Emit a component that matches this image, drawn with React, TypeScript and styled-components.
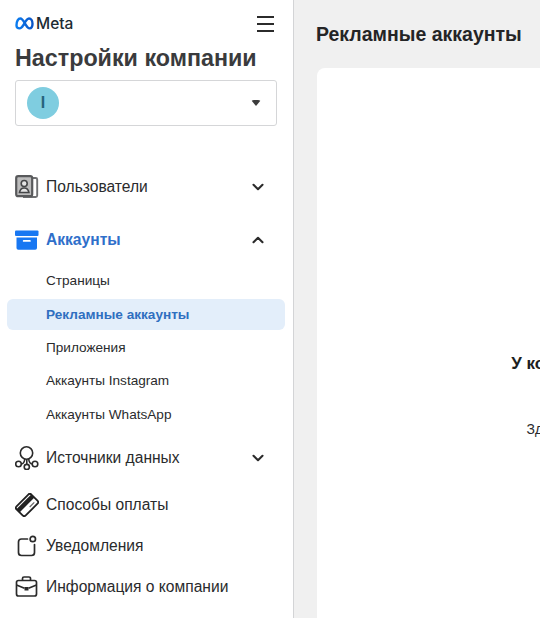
import React from "react";
import styled, { createGlobalStyle } from "styled-components";

const Global = createGlobalStyle`
  html, body { margin: 0; padding: 0; height: 100%; overflow: hidden; background: #f0f0f0; }
  #root { height: 100%; }
  * { box-sizing: border-box; }
`;

const Page = styled.div`
  display: flex;
  width: 540px;
  height: 618px;
  overflow: hidden;
  font-family: "Liberation Sans", Arial, sans-serif;
  color: #1c1e21;
`;

const Sidebar = styled.aside`
  flex: 0 0 294px;
  height: 618px;
  background: #fff;
  border-right: 1px solid #d3d4d6;
  display: flex;
  flex-direction: column;
`;

const TopBar = styled.div`
  display: flex;
  align-items: center;
  justify-content: space-between;
  padding: 12px 19px 0 15px;
  height: 35px;
`;

const Brand = styled.div`
  display: flex;
  align-items: center;
  gap: 2px;
  font-family: "Inter", "Liberation Sans", sans-serif;
  font-size: 15.5px;
  font-weight: 500;
  color: #1c2b33;
`;

const Burger = styled.button`
  display: flex;
  flex-direction: column;
  justify-content: space-between;
  width: 17px;
  height: 16px;
  padding: 0;
  border: 0;
  background: none;
  span { display: block; height: 2px; background: #2b2b2b; }
`;

const Title = styled.h1`
  margin: 8px 0 0 15px;
  height: 30px;
  font-size: 23.3px;
  line-height: 30px;
  font-weight: 700;
  color: #3a3b3d;
  white-space: nowrap;
`;

const CompanySelect = styled.div`
  margin: 7px 16px 0 15px;
  height: 46px;
  border: 1px solid #d5d6d8;
  border-radius: 3px;
  display: flex;
  align-items: center;
  justify-content: space-between;
  padding: 0 15px 0 11px;
`;

const Avatar = styled.div`
  width: 32px;
  height: 32px;
  border-radius: 50%;
  background: #7fcde0;
  color: #25647c;
  display: flex;
  align-items: center;
  justify-content: center;
  font-size: 16px;
  font-weight: 700;
`;

const Caret = styled.div`
  width: 0;
  height: 0;
  margin-top: -1px;
  border-left: 5px solid transparent;
  border-right: 5px solid transparent;
  border-top: 6px solid #3c3c3c;
  border-radius: 3px;
`;

const Nav = styled.nav`
  margin-top: 40px;
  display: flex;
  flex-direction: column;
`;

const Row = styled.div<{ $active?: boolean; $after?: number }>`
  height: 41px;
  margin-bottom: ${(p) => p.$after ?? 0}px;
  padding: 0 29px 0 15px;
  display: flex;
  align-items: center;
  font-size: 15.6px;
  font-weight: ${(p) => (p.$active ? 700 : 400)};
  color: ${(p) => (p.$active ? "#2f6fca" : "#2a2b2d")};
`;

const IconSlot = styled.span`
  flex: 0 0 24px;
  width: 24px;
  height: 24px;
  margin-right: 7px;
  display: flex;
  align-items: center;
  justify-content: center;
`;

const RowLabel = styled.span`
  flex: 1;
  white-space: nowrap;
`;

const SubList = styled.div`
  display: flex;
  flex-direction: column;
  gap: 2.4px;
  margin: 5.2px 0 7.8px;
`;

const SubRow = styled.div<{ $active?: boolean }>`
  height: 31px;
  margin: 0 8px 0 7px;
  padding-left: 39px;
  border-radius: 6px;
  display: flex;
  align-items: center;
  font-size: 13.6px;
  font-weight: ${(p) => (p.$active ? 700 : 400)};
  color: ${(p) => (p.$active ? "#2f6fc0" : "#2a2b2d")};
  background: ${(p) => (p.$active ? "#e3eefa" : "transparent")};
`;

const Main = styled.main`
  flex: 0 0 auto;
  width: 780px;
  padding: 0 0 0 23px;
`;

const MainTitle = styled.h2`
  margin: 0 0 0 -1px;
  height: 68px;
  display: flex;
  align-items: center;
  font-size: 19.5px;
  font-weight: 700;
  color: #242526;
  white-space: nowrap;
`;

const Card = styled.section`
  width: 708px;
  height: 600px;
  background: #fff;
  border-radius: 8px;
  text-align: center;
  padding-top: 286px;
`;

const EmptyTitle = styled.div`
  font-size: 17px;
  line-height: 20px;
  font-weight: 700;
  color: #1c1e21;
  white-space: nowrap;
`;

const EmptyText = styled.div`
  margin-top: 46px;
  margin-left: 0;
  padding-right: 6px;
  font-size: 14px;
  line-height: 18px;
  color: #2a2b2d;
  white-space: nowrap;
`;

const Chevron = ({ up }: { up?: boolean }) => (
  <svg width="12" height="8" viewBox="0 0 12 8" fill="none">
    <path d={up ? "M1.500 6.200 6 1.800l4.500 4.400" : "M1.500 1.800 6 6.200l4.500-4.400"} stroke="#2b2b2b" strokeWidth="2.100" strokeLinecap="round" strokeLinejoin="round" />
  </svg>
);

const MetaMark = () => (
  <svg width="19" height="13" viewBox="0 0 19 13" fill="none">
    <defs>
      <linearGradient id="mm" x1="0" x2="1" y1="0" y2="0">
        <stop offset="0" stopColor="#0a7cf0" />
        <stop offset="1" stopColor="#0a55c8" />
      </linearGradient>
    </defs>
    <path d="M1.500 8.200C1.500 4.200 3.200 1.500 5.300 1.500c2.300 0 3.900 3.700 5.700 6.700 1.100 1.900 2 3.200 3.500 3.200 1.900 0 3-1.900 3-4.600 0-3.200-1.500-5.300-3.500-5.300-2.300 0-3.900 3.500-5.700 6.700-1.200 2.100-2.200 3.200-3.700 3.200-2 0-3.100-1-3.100-3.200Z" stroke="url(#mm)" strokeWidth="2.400" />
  </svg>
);

const PeopleIcon = () => (
  <svg width="24" height="24" viewBox="0 0 24 24" fill="none">
    <path d="M18 3h2.700A1.500 1.500 0 0 1 22.200 4.500v16a1.500 1.500 0 0 1-1.500 1.500H8" stroke="#6f7072" strokeWidth="1.900" />
    <rect x="1.200" y="1.200" width="16" height="20" rx="2" fill="#bdbdbd" stroke="#58595b" strokeWidth="2.200" />
    <circle cx="9.200" cy="8.500" r="3" fill="#e4e4e4" stroke="#454648" strokeWidth="1.600" />
    <path d="M4.500 17.500c.5-3 2.300-4.500 4.700-4.500s4.200 1.500 4.700 4.500Z" fill="#e4e4e4" stroke="#454648" strokeWidth="1.600" />
  </svg>
);

const ArchiveIcon = () => (
  <svg width="24" height="20" viewBox="0 0 24 20" fill="none">
    <rect x="0" y="0.500" width="23.500" height="5.500" rx="1" fill="#1877f2" />
    <path d="M1.500 7.500h20.500V18a1.800 1.800 0 0 1-1.800 1.800H3.300A1.800 1.800 0 0 1 1.500 18Z" fill="#1877f2" />
    <rect x="7.800" y="10" width="8" height="1.800" rx=".9" fill="#fff" />
  </svg>
);

const SourcesIcon = () => (
  <svg width="24" height="24" viewBox="0 0 24 24" fill="none" stroke="#2b2b2b" strokeWidth="1.600">
    <circle cx="11.500" cy="7" r="6.200" />
    <circle cx="3.500" cy="18" r="2.800" />
    <circle cx="11.800" cy="21" r="2.600" />
    <circle cx="20" cy="18" r="2.800" />
    <path d="M11.800 13.200v5.200M6.300 18c2-.2 3.200-1.600 3.500-5M17.200 18c-2-.2-3.200-1.600-3.500-5" />
  </svg>
);

const CardIcon = () => (
  <svg width="24" height="24" viewBox="0 0 24 24" fill="none">
    <g transform="rotate(-45 12 12)">
      <rect x="1.500" y="5.500" width="21" height="13" rx="2.200" fill="#fff" stroke="#222" strokeWidth="1.800" />
      <rect x="1.500" y="7.500" width="21" height="4.500" fill="#222" />
      <path d="M12.500 15.300h6.500" stroke="#666" strokeWidth="1.200" />
    </g>
  </svg>
);

const BellIcon = () => (
  <svg width="24" height="24" viewBox="0 0 24 24" fill="none" stroke="#2b2b2b" strokeWidth="1.700">
    <path d="M12.500 5H6.500A3 3 0 0 0 3.500 8v10.500a3 3 0 0 0 3 3h10a3 3 0 0 0 3-3V10.500" strokeLinecap="round" />
    <circle cx="17.800" cy="5" r="2.700" />
  </svg>
);

const CaseIcon = () => (
  <svg width="24" height="24" viewBox="0 0 24 24" fill="none" stroke="#2b2b2b" strokeWidth="1.700">
    <rect x="1.500" y="5.500" width="20" height="15.500" rx="2" />
    <path d="M7.500 5.500V3.500A1.500 1.500 0 0 1 9 2h5a1.500 1.500 0 0 1 1.500 1.500v2M1.500 10l8 3.300M21.500 10l-8 3.300" />
    <rect x="9.500" y="12" width="4" height="3.500" fill="#2b2b2b" stroke="none" />
  </svg>
);

export default function App() {
  return (
    <>
      <Global />
      <Page>
        <Sidebar>
          <TopBar>
            <Brand>
              <MetaMark />
              <span>Meta</span>
            </Brand>
            <Burger aria-label="Меню">
              <span />
              <span />
              <span />
            </Burger>
          </TopBar>
          <Title>Настройки компании</Title>
          <CompanySelect>
            <Avatar>I</Avatar>
            <Caret />
          </CompanySelect>
          <Nav>
            <Row $after={12}>
              <IconSlot><PeopleIcon /></IconSlot>
              <RowLabel>Пользователи</RowLabel>
              <Chevron />
            </Row>
            <Row $active>
              <IconSlot><ArchiveIcon /></IconSlot>
              <RowLabel>Аккаунты</RowLabel>
              <Chevron up />
            </Row>
            <SubList>
              <SubRow>Страницы</SubRow>
              <SubRow $active>Рекламные аккаунты</SubRow>
              <SubRow>Приложения</SubRow>
              <SubRow>Аккаунты Instagram</SubRow>
              <SubRow>Аккаунты WhatsApp</SubRow>
            </SubList>
            <Row $after={6}>
              <IconSlot><SourcesIcon /></IconSlot>
              <RowLabel>Источники данных</RowLabel>
              <Chevron />
            </Row>
            <Row>
              <IconSlot><CardIcon /></IconSlot>
              <RowLabel>Способы оплаты</RowLabel>
            </Row>
            <Row>
              <IconSlot><BellIcon /></IconSlot>
              <RowLabel>Уведомления</RowLabel>
            </Row>
            <Row>
              <IconSlot><CaseIcon /></IconSlot>
              <RowLabel>Информация о компании</RowLabel>
            </Row>
          </Nav>
        </Sidebar>
        <Main>
          <MainTitle>Рекламные аккаунты</MainTitle>
          <Card>
            <EmptyTitle>У компании нет рекламных аккаунтов</EmptyTitle>
            <EmptyText>Здесь появятся ваши рекламные аккаунты.</EmptyText>
          </Card>
        </Main>
      </Page>
    </>
  );
}
